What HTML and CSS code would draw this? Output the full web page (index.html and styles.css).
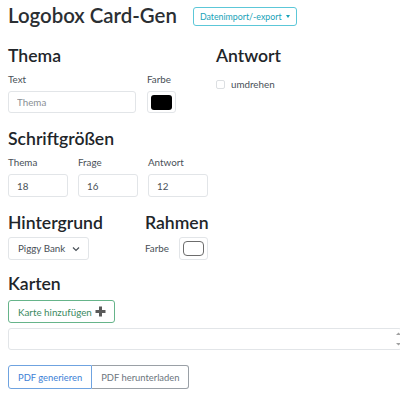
FILE: index.html
```html
<!DOCTYPE html>
<html lang="de">
<head>
<meta charset="utf-8">
<title>Logobox Card-Gen</title>
<link rel="stylesheet" href="styles.css">
</head>
<body>
<header class="header">
  <h1 class="title">Logobox Card-Gen</h1>
  <button class="btn btn-info dropdown">Datenimport/-export <span class="caret"></span></button>
</header>

<section class="row row-thema">
  <div class="col col-thema">
    <h3 class="heading">Thema</h3>
    <div class="fields">
      <div class="field">
        <label class="label">Text</label>
        <input class="input input-text" type="text" placeholder="Thema">
      </div>
      <div class="field">
        <label class="label">Farbe</label>
        <span class="color-box"><span class="swatch swatch-black"></span></span>
      </div>
    </div>
  </div>
  <div class="col">
    <h3 class="heading">Antwort</h3>
    <label class="check"><span class="checkbox"></span>umdrehen</label>
  </div>
</section>

<section class="section section-sizes">
  <h3 class="heading">Schriftgrößen</h3>
  <div class="fields sizes">
    <div class="field">
      <label class="label">Thema</label>
      <input class="input input-num" type="text" value="18">
    </div>
    <div class="field">
      <label class="label">Frage</label>
      <input class="input input-num" type="text" value="16">
    </div>
    <div class="field">
      <label class="label">Antwort</label>
      <input class="input input-num" type="text" value="12">
    </div>
  </div>
</section>

<section class="row row-bg">
  <div class="col col-bg">
    <h3 class="heading">Hintergrund</h3>
    <div class="select">Piggy Bank
      <svg class="chev" width="8" height="6" viewBox="0 0 8 6"><path d="M1 1.5 L4 4.5 L7 1.5" fill="none" stroke="#495057" stroke-width="1.2"/></svg>
    </div>
  </div>
  <div class="col">
    <h3 class="heading">Rahmen</h3>
    <div class="inline-field">
      <span class="label-inline">Farbe</span>
      <span class="color-box color-box-2"><span class="swatch swatch-white"></span></span>
    </div>
  </div>
</section>

<section class="section section-cards">
  <h3 class="heading">Karten</h3>
  <button class="btn btn-success">Karte hinzufügen
    <svg class="plus" width="11" height="11" viewBox="0 0 11 11"><path d="M4 0.5h3v3.5h3.5v3h-3.5v3.5h-3v-3.5h-3.5v-3h3.5z" fill="#5a5a5a"/></svg>
  </button>
  <div class="textarea-wrap">
    <div class="textarea"></div>
    <div class="scroll">
      <svg width="7" height="20" viewBox="0 0 7 20"><path d="M1 6 L3.5 3.5 L6 6 Z" fill="#a0a0a0"/><path d="M1 14 L3.5 16.5 L6 14 Z" fill="#a0a0a0"/></svg>
    </div>
  </div>
</section>

<div class="btn-group">
  <button class="btn btn-primary">PDF generieren</button>
  <button class="btn btn-secondary">PDF herunterladen</button>
</div>
</body>
</html>
```

FILE: styles.css
```css
html, body {
  margin: 0;
  overflow: hidden;
}
body {
  padding: 0 8px;
  width: 400px;
  height: 400px;
  box-sizing: border-box;
  font-family: Lato, "Noto Sans", sans-serif;
  font-size: 9.8px;
  line-height: 1.5;
  color: #2b2f33;
  background: #fff;
}
.header {
  display: flex;
  align-items: center;
  gap: 16px;
  padding-top: 3px;
}
.title {
  margin: 0;
  font-size: 20.4px;
  font-weight: 600;
  line-height: 25px;
  white-space: nowrap;
}
.btn {
  font-family: inherit;
  background: #fff;
  border: 1px solid;
  border-radius: 3px;
  cursor: pointer;
  white-space: nowrap;
}
.dropdown {
  height: 19px;
  padding: 0 6px;
  font-size: 8.8px;
  color: #17a2b8;
  border-color: #5cc7d8;
  display: flex;
  align-items: center;
  gap: 4px;
  margin-top: 1px;
}
.caret {
  width: 0;
  height: 0;
  border-left: 2.5px solid transparent;
  border-right: 2.5px solid transparent;
  border-top: 3px solid #17a2b8;
}
.heading {
  margin: 0;
  font-size: 17.6px;
  font-weight: 600;
  line-height: 22px;
  color: #212529;
}
.row {
  display: flex;
}
.row-thema {
  margin-top: 17px;
}
.col-thema {
  width: 208px;
}
.fields {
  display: flex;
  gap: 11px;
}
.field {
  display: flex;
  flex-direction: column;
}
.label {
  display: block;
  margin-top: 4px;
  line-height: 16px;
  margin-bottom: 4px;
  color: #495057;
}
.input {
  box-sizing: border-box;
  height: 22px;
  border: 1px solid #e2e5e8;
  border-radius: 3px;
  padding: 0 8px;
  font-family: inherit;
  font-size: 9.8px;
  color: #495057;
  outline: none;
}
.input::placeholder {
  color: #8a9096;
}
.input-text {
  width: 128px;
}
.color-box {
  box-sizing: border-box;
  display: flex;
  align-items: center;
  justify-content: center;
  width: 29px;
  height: 22px;
  border: 1px solid #e2e5e8;
  border-radius: 3px;
}
.swatch {
  display: block;
  width: 21px;
  height: 15px;
  border-radius: 3px;
  box-sizing: border-box;
}
.swatch-black {
  background: #000;
}
.swatch-white {
  background: #fff;
  border: 1px solid #6c6c6c;
  border-radius: 4px;
}
.check {
  display: flex;
  align-items: center;
  gap: 6px;
  margin-top: 10px;
  line-height: 14px;
  color: #495057;
}
.checkbox {
  display: block;
  box-sizing: border-box;
  width: 9px;
  height: 9px;
  border: 1px solid #dcdfe2;
  border-radius: 2px;
}
.section-sizes {
  margin-top: 15px;
}
.sizes {
  gap: 10px;
}
.input-num {
  width: 60px;
  height: 23px;
}
.row-bg {
  margin-top: 15px;
}
.col-bg {
  width: 137px;
}
.select {
  box-sizing: border-box;
  display: inline-flex;
  align-items: center;
  gap: 7px;
  white-space: nowrap;
  height: 23px;
  margin-top: 3px;
  padding: 0 8px 0 9px;
  border: 1px solid #e2e5e8;
  border-radius: 3px;
  color: #495057;
}
.inline-field {
  display: flex;
  align-items: center;
  gap: 10px;
  margin-top: 3px;
}
.label-inline {
  color: #495057;
}
.color-box-2 {
  height: 23px;
}
.section-cards {
  margin-top: 13px;
}
.btn-success {
  display: flex;
  align-items: center;
  gap: 3px;
  margin-top: 5px;
  height: 23px;
  padding: 0 8px 0 9px;
  font-size: 9.8px;
  color: #3b8a5f;
  border-color: #66b48a;
}
.textarea-wrap {
  position: relative;
  margin-top: 5px;
  width: 394px;
}
.textarea {
  box-sizing: border-box;
  height: 22px;
  border: 1px solid #e2e5e8;
  border-radius: 3px;
}
.scroll {
  position: absolute;
  right: 0;
  top: 1px;
  width: 7px;
  height: 20px;
}
.btn-group {
  display: inline-flex;
  margin-top: 15px;
}
.btn-group .btn {
  height: 24px;
  padding: 0 9px;
  font-size: 9.4px;
}
.btn-primary {
  color: #3d7fd6;
  border-color: #6fa3e0;
  border-radius: 3px 0 0 3px;
}
.btn-secondary {
  color: #6c757d;
  border-color: #9aa0a6;
  border-left: none;
  border-radius: 0 3px 3px 0;
}
```
